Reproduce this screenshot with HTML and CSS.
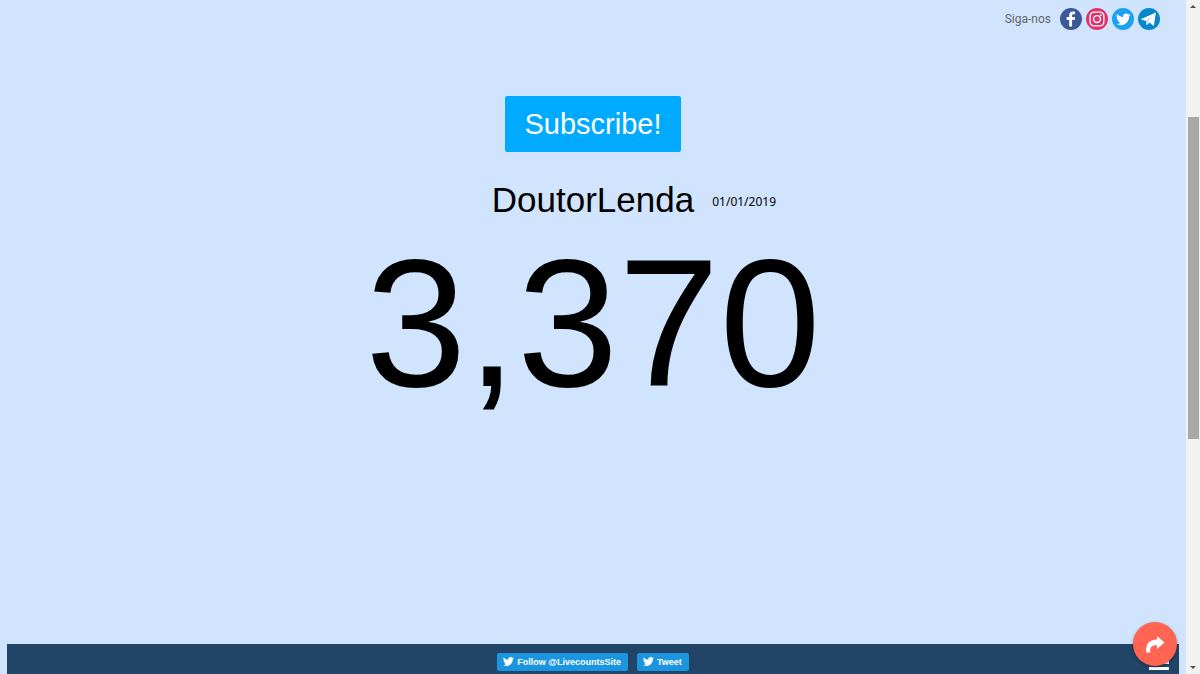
FILE: index.html
```html
<!DOCTYPE html>
<html lang="pt-BR">
<head>
    <meta charset="UTF-8">
    <meta name="viewport" content="width=device-width, initial-scale=1.0">
    <title>DoutorLenda - Live Subscriber Count</title>
    <link rel="stylesheet" href="styles.css">
</head>
<body>
<svg width="0" height="0" class="sprite" aria-hidden="true">
    <symbol id="bird" viewBox="0 0 24 24">
        <path d="M23.9 4.6a10 10 0 0 1-2.8.8 4.9 4.9 0 0 0 2.1-2.7 9.900 9.900 0 0 1-3.100 1.200 4.900 4.900 0 0 0-8.400 4.500A14 14 0 0 1 1.600 3.200a4.900 4.900 0 0 0 1.500 6.500 4.900 4.900 0 0 1-2.200-.6v.1a4.900 4.900 0 0 0 3.900 4.800 5 5 0 0 1-2.200.1 4.900 4.900 0 0 0 4.600 3.400A9.900 9.900 0 0 1 0 19.500a13.900 13.900 0 0 0 7.500 2.200c9.100 0 14-7.500 14-14v-.6a10 10 0 0 0 2.400-2.500z"/>
    </symbol>
</svg>
<div class="page">
    <header class="social">
        <span>Siga-nos</span>
        <nav class="social-links">
            <a href="#" class="facebook" aria-label="Facebook">
                <svg viewBox="0 0 32 32"><path d="M17.600 27V17.500h3.700l.6-4.300h-4.300v-2.300c0-1.200.5-1.900 2.100-1.900h2.200V5.200c-.4-.1-1.700-.2-3.200-.2-3.200 0-5.300 1.900-5.300 5.300v2.900H9.700v4.300h3.700V27z"/></svg>
            </a>
            <a href="#" class="instagram" aria-label="Instagram">
                <svg viewBox="0 0 32 32">
                    <rect x="6" y="6" width="20" height="20" rx="6" fill="none" stroke="#fff" stroke-width="2"/>
                    <circle cx="16" cy="16" r="5" fill="none" stroke="#fff" stroke-width="2"/>
                    <circle cx="21.500" cy="10.500" r="1.300"/>
                </svg>
            </a>
            <a href="#" class="twitter" aria-label="Twitter">
                <svg viewBox="0 0 32 32"><use href="#bird" x="6" y="6" width="21" height="21"/></svg>
            </a>
            <a href="#" class="telegram" aria-label="Telegram">
                <svg viewBox="0 0 32 32">
                    <path d="M4 16.500 26 6.500 23 26 16.500 21 12.500 25 11.500 19z"/>
                    <path class="fold" d="M11.500 19 22 11 14 20 12.500 25z"/>
                </svg>
            </a>
        </nav>
    </header>

    <main class="counter">
        <button type="button" class="subscribe">Subscribe!</button>
        <div class="channel">
            <h1>DoutorLenda</h1>
            <time datetime="2019-01-01">01/01/2019</time>
        </div>
        <p class="count">3,370</p>
    </main>

    <footer class="footer">
        <a href="#" class="tweet-btn"><svg><use href="#bird"/></svg>Follow @LivecountsSite</a>
        <a href="#" class="tweet-btn"><svg><use href="#bird"/></svg>Tweet</a>
        <button type="button" class="menu" aria-label="Menu"></button>
    </footer>
    <button type="button" class="share" aria-label="Share">
        <svg viewBox="0 0 20 20"><path d="M12 2 19.500 8.500 12 15V11.300C8 11.300 5.500 12.500 5.200 15.500V18.500H1.200C.5 9.500 4 6 12 5.600z"/></svg>
    </button>
</div>
<div class="scrollbar" aria-hidden="true">
    <span class="arrow up"></span>
    <span class="track"><span class="thumb"></span></span>
    <span class="arrow down"></span>
</div>
</body>
</html>
```
FILE: styles.css
```css
* {
    box-sizing: border-box;
}
body {
    margin: 0;
    display: flex;
    height: 100vh;
    background-color: #d0e4fe;
    font-family: "Liberation Sans", Arial, sans-serif;
    color: #000;
}
.sprite {
    position: absolute;
}
.page {
    position: relative;
    flex: 1;
    display: flex;
    flex-direction: column;
}
.social {
    display: flex;
    justify-content: flex-end;
    align-items: center;
    gap: 9px;
    padding: 8px 26px 0 0;
    font-family: Roboto, sans-serif;
    font-size: 12px;
    color: #666;
}
.social-links {
    display: flex;
    gap: 4px;
}
.social-links a {
    width: 22px;
    height: 22px;
    border-radius: 50%;
}
.social-links svg {
    display: block;
    width: 22px;
    height: 22px;
    fill: #fff;
}
.facebook {
    background-color: #3b5998;
}
.instagram {
    background-color: #e4316b;
}
.twitter {
    background-color: #1da1f2;
}
.telegram {
    background-color: #0788cb;
}
.telegram .fold {
    fill: #b5d8ec;
}
.counter {
    flex: 1;
    display: flex;
    flex-direction: column;
    align-items: center;
    padding-top: 66px;
}
.subscribe {
    padding: 11px 19px;
    border: none;
    border-radius: 2px;
    background-color: #00aaff;
    color: #fff;
    font-family: inherit;
    font-size: 29px;
    line-height: 34px;
    cursor: pointer;
}
.channel {
    display: grid;
    grid-template-columns: 1fr auto 1fr;
    align-items: center;
    column-gap: 18px;
    width: 100%;
    margin-top: 28px;
}
.channel h1 {
    grid-column: 2;
    margin: 0;
    font-size: 35px;
    font-weight: normal;
    line-height: 40px;
}
.channel time {
    padding-top: 4px;
    font-family: "Noto Sans", sans-serif;
    font-size: 12px;
    line-height: 18px;
}
.count {
    margin: 0;
    font-size: 182px;
    line-height: 206px;
}
.footer {
    display: flex;
    justify-content: center;
    align-items: center;
    gap: 9px;
    height: 30px;
    margin: 0 7px;
    padding-top: 5px;
    background-color: #224466;
}
.tweet-btn {
    display: flex;
    align-items: center;
    gap: 3px;
    height: 18px;
    padding: 0 7px 0 6px;
    border-radius: 2px;
    background-color: #1b95e0;
    color: #fff;
    font-size: 9px;
    font-weight: bold;
    text-decoration: none;
}
.tweet-btn svg {
    width: 11px;
    height: 11px;
    fill: #fff;
}
.menu {
    position: absolute;
    right: 17px;
    bottom: 4px;
    width: 20px;
    height: 9px;
    padding: 0;
    border: solid #fff;
    border-width: 3px 0;
    background: none;
}
.share {
    position: absolute;
    right: 9px;
    bottom: 8px;
    display: flex;
    justify-content: center;
    align-items: center;
    width: 44px;
    height: 44px;
    padding: 0;
    border: none;
    border-radius: 50%;
    background-color: #ff6550;
    box-shadow: 0 1px 3px rgba(0,0,0,0.4);
    cursor: pointer;
}
.share svg {
    width: 20px;
    height: 20px;
    fill: #fff;
}
.scrollbar {
    display: flex;
    flex-direction: column;
    align-items: center;
    width: 14px;
    padding: 5px 0;
    background-color: #f1f1f1;
}
.arrow {
    border: 3px solid transparent;
}
.up {
    border-top: none;
    border-bottom-color: #505050;
}
.down {
    border-bottom: none;
    border-top-color: #505050;
}
.track {
    flex: 1;
    width: 11px;
}
.thumb {
    display: block;
    height: 49%;
    margin-top: 109px;
    background-color: #a8a8a8;
}
```
